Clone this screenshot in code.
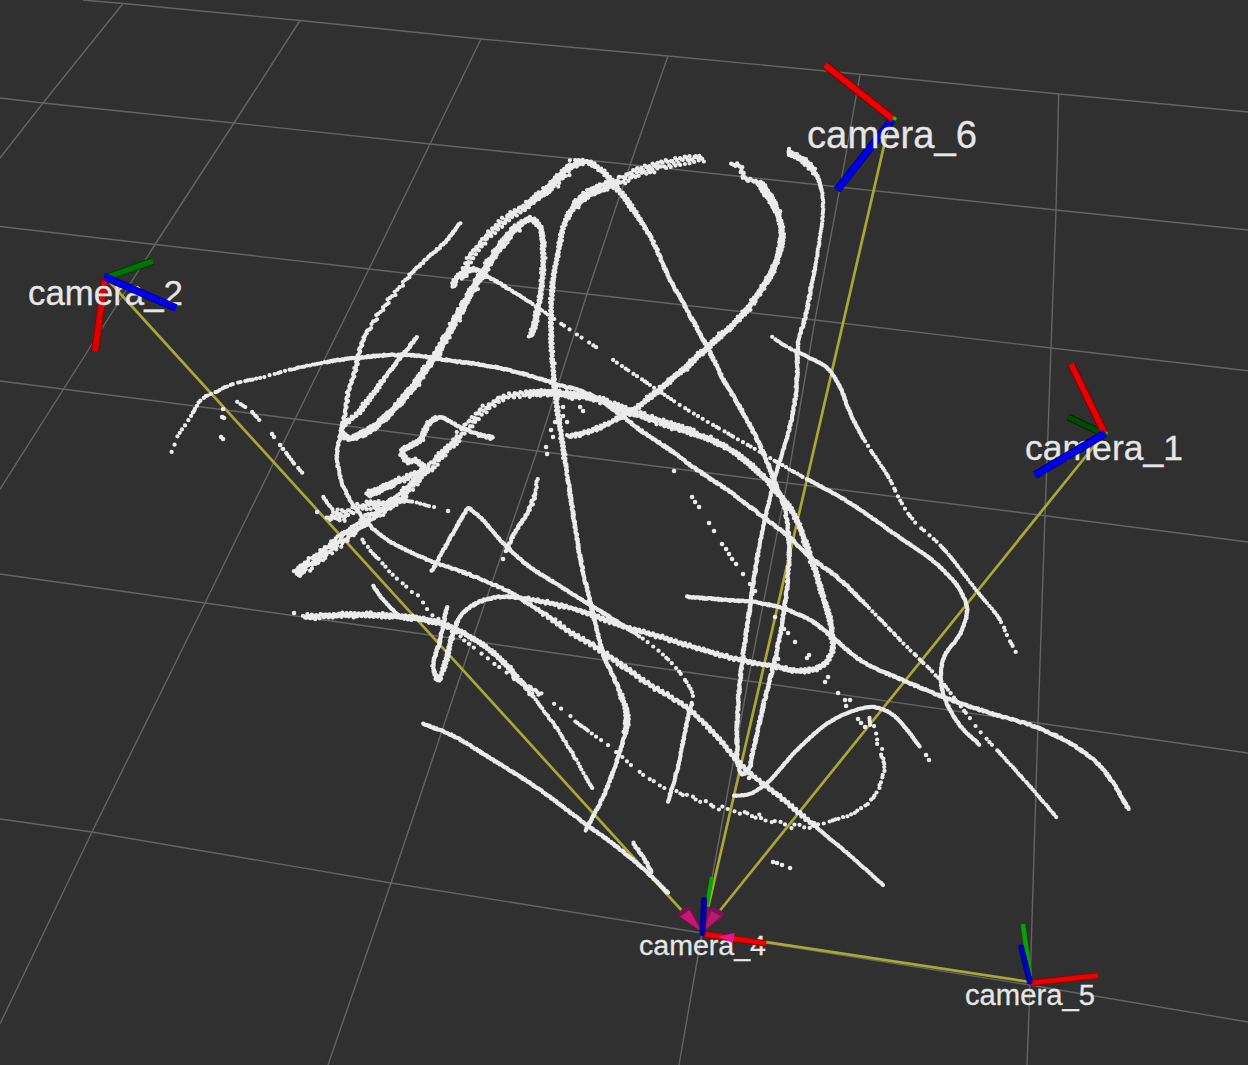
import React from "react";

// Floor grid, drawn as polylines following the perspective.
const GRID = [
  "83,0 123,3.5 300,20.5 481,39 668,56 860,74.3 1059,94 1248,112",
  "0,98 43,103 234,123 430,144 620,163.5 839,187 1056,210 1248,230",
  "0,226.5 155,244.5 369,269 587,294 815,320 1051,348 1248,370.7",
  "0,381 160,401.5 295,419 537,451 787,483 1045,515.7 1248,542",
  "0,574 205,603 472,641 748,681 1038,723 1248,753",
  "0,819 92,832 391,883 702,933 1030,985 1248,1022",
  "123,3.5 43,103 0,158",
  "300,20.5 234,123 155,244.5 82,360 0,489",
  "481,39 430,144 369,269 295,419 205,603 92,832 0,1024",
  "668,56 630,165 587,294 537,451 472,641 391,883 328,1065",
  "860,74.3 839,193 815,320 787,483 748,681 702,933 679,1065",
  "1058.7,94 1056,210 1051,348 1045,516 1038,723 1030,985 1027,1065",
];

// Each entry: x, y and optionally the sampling step and the lateral spread from there on.
const TRACKS = [
  [[460,223,1.4,0.7],[447,240,1.6,1],[430,256],[412,273,2.3,1.9],[399,288],[387,303],[373,323],[368,330,1.6,1.3],[362,343],[357,363],[352,380],[348,393],[345,413],[341,433],[337,452,1.5,0.9],[338,467],[342,483],[352,503],[363,518],[383,537],[410,552],[433,562],[460,571,1.4,1.1],[490,583],[513,594],[527,603],[543,613,1.4,2],[567,630],[600,650],[617,662],[647,683],[687,708,1.3,1.5],[720,740],[743,767],[780,797],[817,828,1.5,0.4],[847,853],[883,885]],
  [[463,279,1.3,3],[467,263,1.2,3.4],[480,245],[493,231],[507,218],[527,205,0.8,3.8],[538,197],[550,187],[567,170],[574,164],[582,161,1,2],[590,163],[597,167],[613,183],[620,192],[640,220,1,1.2],[657,250],[663,265],[687,310],[707,347],[722,377],[747,420],[762,450],[775,483,1,1.2],[784,507],[789,547],[787,587],[777,650],[763,707],[753,750],[747,771],[743,774],[738,765],[737,745],[738,707],[745,640],[750,607],[758,553,1.3,0.6],[767,510],[777,470],[789,430,1.1,1.1],[795,400],[797,375],[798,345,1.3,1.1],[807,310],[811,287],[815,267,2.3,0.5],[820,237],[823,210],[822,192,1,1.2],[819,180],[815,173,0.8,3],[808,164],[800,158],[787,152]],
  [[531,337,0.9,2.4],[537,313,1,1.7],[542,280],[543,247,0.8,1.8],[540,227,0.8,2.2],[532,219],[517,227,0.7,3.3],[500,247],[480,277],[457,317],[437,353,0.7,2.8],[410,390],[380,422],[360,435,0.7,2.7],[347,438],[342,432,1,1.8],[360,411],[383,380,0.8,1],[417,337]],
  [[454,287,0.8,2],[456,278],[465,272],[477,270,1.3,0.9],[487,276],[507,288,2.6,0.4],[537,307],[547,314,6.5,0.2],[560,323],[597,348]],
  [[613,360,4.4,0.2],[650,385],[683,407],[727,433],[760,452],[787,468,3.2,0.3],[803,477,1,0.6],[840,497],[893,533],[943,570],[960,590],[967,610],[962,630],[943,660],[941,683],[950,710],[962,728],[980,745]],
  [[172,452,6,0.6],[177,437],[190,418,3.2,0.4],[202,399],[218,391],[230,385,3.8,0.4],[260,378],[293,369,2.2,0.6],[327,362,1.1,1],[360,357.5],[407,355],[460,362],[480,364.5],[520,373],[553,383],[597,398,1,1.1],[620,415],[643,432],[670,450],[693,467],[730,492],[763,517],[790,538],[810,557],[837,577],[863,602,3.8,0.3],[907,647],[940,680],[965,712,6.5,0.3],[983,735],[997,750,2.6,0.4],[1033,790],[1058,819]],
  [[703,157,1.2,4.6],[685,160],[660,165,1,4.8],[635,173],[613,184,0.8,4.5],[597,189,0.6,4],[585,196,0.6,3.8],[575,206,0.8,2.2],[567,218,1,1.5],[558,253],[552,290],[551,330],[553,370],[557,407],[565,460,1,1.1],[572,507],[582,567],[592,610],[603,653],[620,693,0.9,1.8],[627,717,0.7,2.4],[625,733,1,0.9],[618,757],[603,797],[585,831]],
  [[731,165,1.4,1.6],[740,166],[744,178],[757,182,0.7,3.7],[767,193],[776,210,0.8,2.5],[782,233],[778,257,0.8,2.3],[763,287,0.9,2.3],[740,317,0.9,2.2],[707,348],[667,383,1,2],[633,410,1.1,1.9],[613,421],[593,430],[567,437]],
  [[296,574,0.7,5.4],[312,562],[340,541],[363,523,0.8,4.6],[393,503],[413,484,1,3.8],[437,460],[460,435,1.3,5],[473,419],[487,407,1.4,3.4],[500,399],[527,394,0.9,3.2],[553,393],[573,395],[597,399,1,3.4],[617,407],[640,415],[660,422],[693,433,0.9,2.1],[727,448,0.9,1.9],[753,467],[773,487],[793,513,0.9,1.7],[807,547],[823,597],[832,633,1,2],[830,657],[820,667],[800,671],[777,667,1.2,1.6],[740,660],[693,647],[660,637],[613,623],[587,613],[550,603],[527,599,1,1.1],[500,597],[477,603],[460,617],[452,637,0.9,1.6],[443,670],[438,680],[434,672,1,1],[440,640],[447,606]],
  [[367,495,0.8,3.2],[393,483],[423,467,0.8,2.4],[417,461],[407,461],[402,453,0.7,1.9],[420,440],[430,422],[437,418,1,0.9],[460,427],[477,434,1,1.7],[493,438]],
  [[327,519,1.4,4],[345,513],[360,507,1,4],[380,504,1.1,1.5],[407,501,3.8,0.3],[437,507],[439,507]],
  [[323,497,2.6,0.5],[333,510,1.3,4],[345,522]],
  [[432,571,1.2,0.8],[453,533],[466,511],[468,508],[471,510,1.1,0.7],[507,547],[527,565],[555,583],[587,603],[613,619,1.2,0.8],[633,632,5,0.3],[660,652],[683,677],[693,697,1.3,0.8],[689,713],[677,770],[668,802]],
  [[537,479,2.4,1],[536,490,1.6,2.2],[528,512,1.2,1],[515,532],[506,552]],
  [[303,617,1.1,3],[343,615,1,2.7],[393,616,0.9,2.3],[420,619],[443,624,0.9,1.4],[467,635],[497,656],[517,677,1.5,1.5],[533,697,2.8,0.9],[553,723],[582,770],[593,789]],
  [[373,586,1.2,0.5],[385,602],[398,615]],
  [[362,540,4,0.7],[370,550],[380,561,6.5,0.4],[395,577],[412,592,6,2],[433,615],[460,637,7,0.3],[487,658],[507,673,1.8,1.6],[542,695]],
  [[554,704,8,0.3],[567,713],[575,721,2.8,0.3],[587,730,7.5,0.3],[610,747],[622,757],[633,767,7,0.4],[660,785,5,2.2],[693,798],[720,808],[743,813],[780,823],[810,826],[827,822,3.6,1],[850,815],[868,803],[880,785],[884,765],[880,750,5,2.6],[873,727,3.6,2.2],[867,717]],
  [[772,337,3.2,0.3],[787,347,2.3,0.4],[808,357,1.3,0.6],[827,368],[840,387],[848,408],[863,438,4.6,0.2],[868,446,2.8,0.3],[890,480,4.5,0.3],[900,500],[913,520,5.6,0.2],[937,542,2.6,0.2],[980,595],[1000,620,5,0.3],[1008,637],[1016,653]],
  [[687,597,1,0.9],[727,600],[760,603],[793,612],[813,622],[833,638],[860,660,1,1],[907,682],[943,697],[990,713],[1038,728],[1073,745],[1097,763],[1113,783],[1129,810]],
  [[734,796,1.2,0.4],[750,794],[763,786],[797,750],[833,720],[853,711],[873,707],[890,713],[907,730],[920,747]],
  [[423,724,1,0.8],[447,733],[493,760],[540,790],[580,820],[617,847],[650,875],[668,893]],
  [[633,843,1.2,1],[643,857],[652,873]],
  [[237,402,2.8,0.3],[247,408]], [[252,412,2.8,0.3],[260,421]],
  [[286,453,2.4,0.3],[295,465]], [[298,468,2.6,0.3],[303,474]],
];

const DOTS = [
  [272,434],[274,437],[280,445],[283,449],[223,409],[222,417],[224,418],[221,437],[223,439],[317,512],[448,511],[294,613],[503,559],
  [563,407],[563,416],[567,422],[555,422],[551,430],[553,437],[546,447],[547,454],[580,407],[583,411],
  [674,471],[692,497],[695,502],[699,507],[709,523],[714,531],[722,544],[726,549],[729,554],[732,559],[736,564],[743,574],[750,584],[755,591],
  [775,617],[784,629],[788,633],[795,642],[807,658],[809,655],[778,659],[825,682],[828,677],[838,693],[845,700],[850,700],[846,706],[858,719],[861,723],[865,727],
  [749,778],[926,755],[929,760],[773,862],[777,863],[782,865],[790,868],
];

// Small deterministic generator so the cloud is identical on every render.
function makeRandom(seed) {
  let s = seed;
  return () => {
    s = (s * 16807) % 2147483647;
    return s / 2147483647;
  };
}

function dot(x, y) {
  return "M" + x.toFixed(1) + " " + y.toFixed(1) + "h.1";
}

// Unit-speed tangent at b, weighted by the lengths of both neighbouring chords.
function tangent(a, b, c, k) {
  const l1 = Math.hypot(b[0] - a[0], b[1] - a[1]);
  const l2 = Math.hypot(c[0] - b[0], c[1] - b[1]);
  if (l1 === 0) return (c[k] - b[k]) / l2;
  if (l2 === 0) return (b[k] - a[k]) / l1;
  return (((b[k] - a[k]) / l1) * l2 + ((c[k] - b[k]) / l2) * l1) / (l1 + l2);
}

function hermite(b, c, m1, m2, t) {
  const t2 = t * t;
  const t3 = t2 * t;
  return (2 * t3 - 3 * t2 + 1) * b + (t3 - 2 * t2 + t) * m1 + (3 * t2 - 2 * t3) * c + (t3 - t2) * m2;
}

function trackPath(pts, seed) {
  const rnd = makeRandom(seed);
  let step = 1.5;
  let spread = 0.5;
  let carry = 0;
  let n = 0;
  let out = "";
  for (let i = 0; i < pts.length - 1; i++) {
    const p0 = pts[Math.max(0, i - 1)];
    const p1 = pts[i];
    const p2 = pts[i + 1];
    const p3 = pts[Math.min(pts.length - 1, i + 2)];
    if (p1.length > 2) {
      step = p1[2];
      spread = p1[3];
    }
    const len = Math.hypot(p2[0] - p1[0], p2[1] - p1[1]);
    const nx = -(p2[1] - p1[1]) / len;
    const ny = (p2[0] - p1[0]) / len;
    const m1x = tangent(p0, p1, p2, 0) * len;
    const m1y = tangent(p0, p1, p2, 1) * len;
    const m2x = tangent(p1, p2, p3, 0) * len;
    const m2y = tangent(p1, p2, p3, 1) * len;
    let d = carry;
    while (d < len) {
      const t = d / len;
      const x = hermite(p1[0], p2[0], m1x, m2x, t);
      const y = hermite(p1[1], p2[1], m1y, m2y, t);
      const wave = ((n % 4) - 1.5) / 1.5;
      let o = (rnd() - 0.5) * 1.4 * spread;
      if (spread > 1.2) {
        o = spread * (wave * 0.65 + (rnd() - 0.5) * 0.7);
        if (rnd() < 0.06) o *= 1.5;
      }
      out += dot(x + nx * o, y + ny * o);
      d += step >= 2 ? Math.max(2, step * (0.5 + rnd())) : step;
      n++;
    }
    carry = d - len;
  }
  return out;
}

const CLOUD = TRACKS.map((t, i) => trackPath(t, 917 + i * 131));
const LOOSE = DOTS.map(([x, y]) => dot(x, y)).join("");

// A cylinder: dark outline around the body colour.
function Axis({ x1, y1, x2, y2, edge, body, w = 7 }) {
  return (
    <g>
      <line x1={x1} y1={y1} x2={x2} y2={y2} stroke={edge} strokeWidth={w} />
      <line x1={x1} y1={y1} x2={x2} y2={y2} stroke={body} strokeWidth={w - 2.2} />
    </g>
  );
}

function Label({ x, y, size, width, children }) {
  return (
    <text x={x} y={y} fontSize={size} textLength={width} lengthAdjust="spacingAndGlyphs" fill="#e6e6e6" stroke="#e6e6e6" strokeWidth="0.3" className="font-['Liberation_Sans',sans-serif]">
      {children}
    </text>
  );
}

export default function App() {
  return (
    <main className="h-[1065px] w-[1248px] overflow-hidden bg-[#303030]">
      <svg viewBox="0 0 1248 1065" className="block h-full w-full">
        <g fill="none" stroke="#646464" strokeWidth="1.4">
          {GRID.map((p) => <polyline key={p} points={p} />)}
        </g>
        <g stroke="#a8a838" strokeWidth="2.7">
          <line x1="107" y1="279" x2="684" y2="913" />
          <line x1="889" y1="124" x2="708" y2="908" />
          <line x1="1103" y1="435" x2="718" y2="913" />
          <line x1="1030" y1="982" x2="760" y2="941" />
        </g>
        <g fill="none" stroke="#ebebeb" strokeWidth="4.2" strokeLinecap="round">
          {CLOUD.map((d, i) => <path key={i} d={d} />)}
          <path d={LOOSE} strokeWidth="4.5" />
        </g>

        <Axis x1={105} y1={278} x2={95} y2={351} edge="#8b0000" body="#dc0000" w={8} />
        <Axis x1={105} y1={278} x2={153} y2={261} edge="#003f00" body="#007500" w={7.5} />
        <Label x={28} y={304.5} size={34.6} width={155}>camera_2</Label>
        <Axis x1={104} y1={276.5} x2={176} y2={308} edge="#000090" body="#0000ee" w={7.5} />

        <Axis x1={892} y1={120} x2={837} y2={190} edge="#000095" body="#0000e6" w={8} />
        <Axis x1={893} y1={119} x2={825} y2={65} edge="#8b0000" body="#f00000" w={8} />
        <circle cx="894.7" cy="118.5" r="1.9" fill="#00d800" />
        <Label x={807} y={148} size={38} width={170}>camera_6</Label>

        <Label x={1025} y={459.5} size={35.2} width={158}>camera_1</Label>
        <Axis x1={1104} y1={434} x2={1068} y2={417} edge="#002800" body="#004c00" w={7} />
        <Axis x1={1105} y1={434} x2={1071} y2={364} edge="#820000" body="#e60000" w={8} />
        <circle cx="1107" cy="433" r="1.4" fill="#00b800" />
        <Axis x1={1105} y1={433.5} x2={1035} y2={475} edge="#000080" body="#0000ef" w={8} />

        <polygon points="678,916 680,911 685,907 690,907.5 702,932" fill="#75104a" />
        <polygon points="680,916.5 689.5,910 702,932" fill="#cc1478" />
        <polygon points="706,906 719,909 724.5,914 722,918 702,932" fill="#7c1450" />
        <polygon points="711,911 721,916 703,932" fill="#b81870" />
        <Label x={639} y={954.8} size={28.4} width={127}>camera_4</Label>
        <line x1="707" y1="905" x2="712" y2="877" stroke="#00a800" strokeWidth="4" />
        <Axis x1={704} y1={934} x2={766} y2={943.5} edge="#a00000" body="#f50000" w={6.5} />
        <polygon points="718,936.5 734.5,933 733,943" fill="#e61496" />
        <line x1="702.5" y1="933" x2="704" y2="900" stroke="#00009c" strokeWidth="6" strokeLinecap="round" />

        <Label x={965} y={1004.8} size={29} width={130}>camera_5</Label>
        <line x1="1030" y1="976" x2="1023" y2="924" stroke="#00a400" strokeWidth="4.6" />
        <Axis x1={1030} y1={983} x2={1098} y2={975.5} edge="#920000" body="#ee0000" w={6.5} />
        <line x1="1029.7" y1="981.5" x2="1021.3" y2="947.5" stroke="#0000aa" strokeWidth="6" strokeLinecap="round" />
      </svg>
    </main>
  );
}
